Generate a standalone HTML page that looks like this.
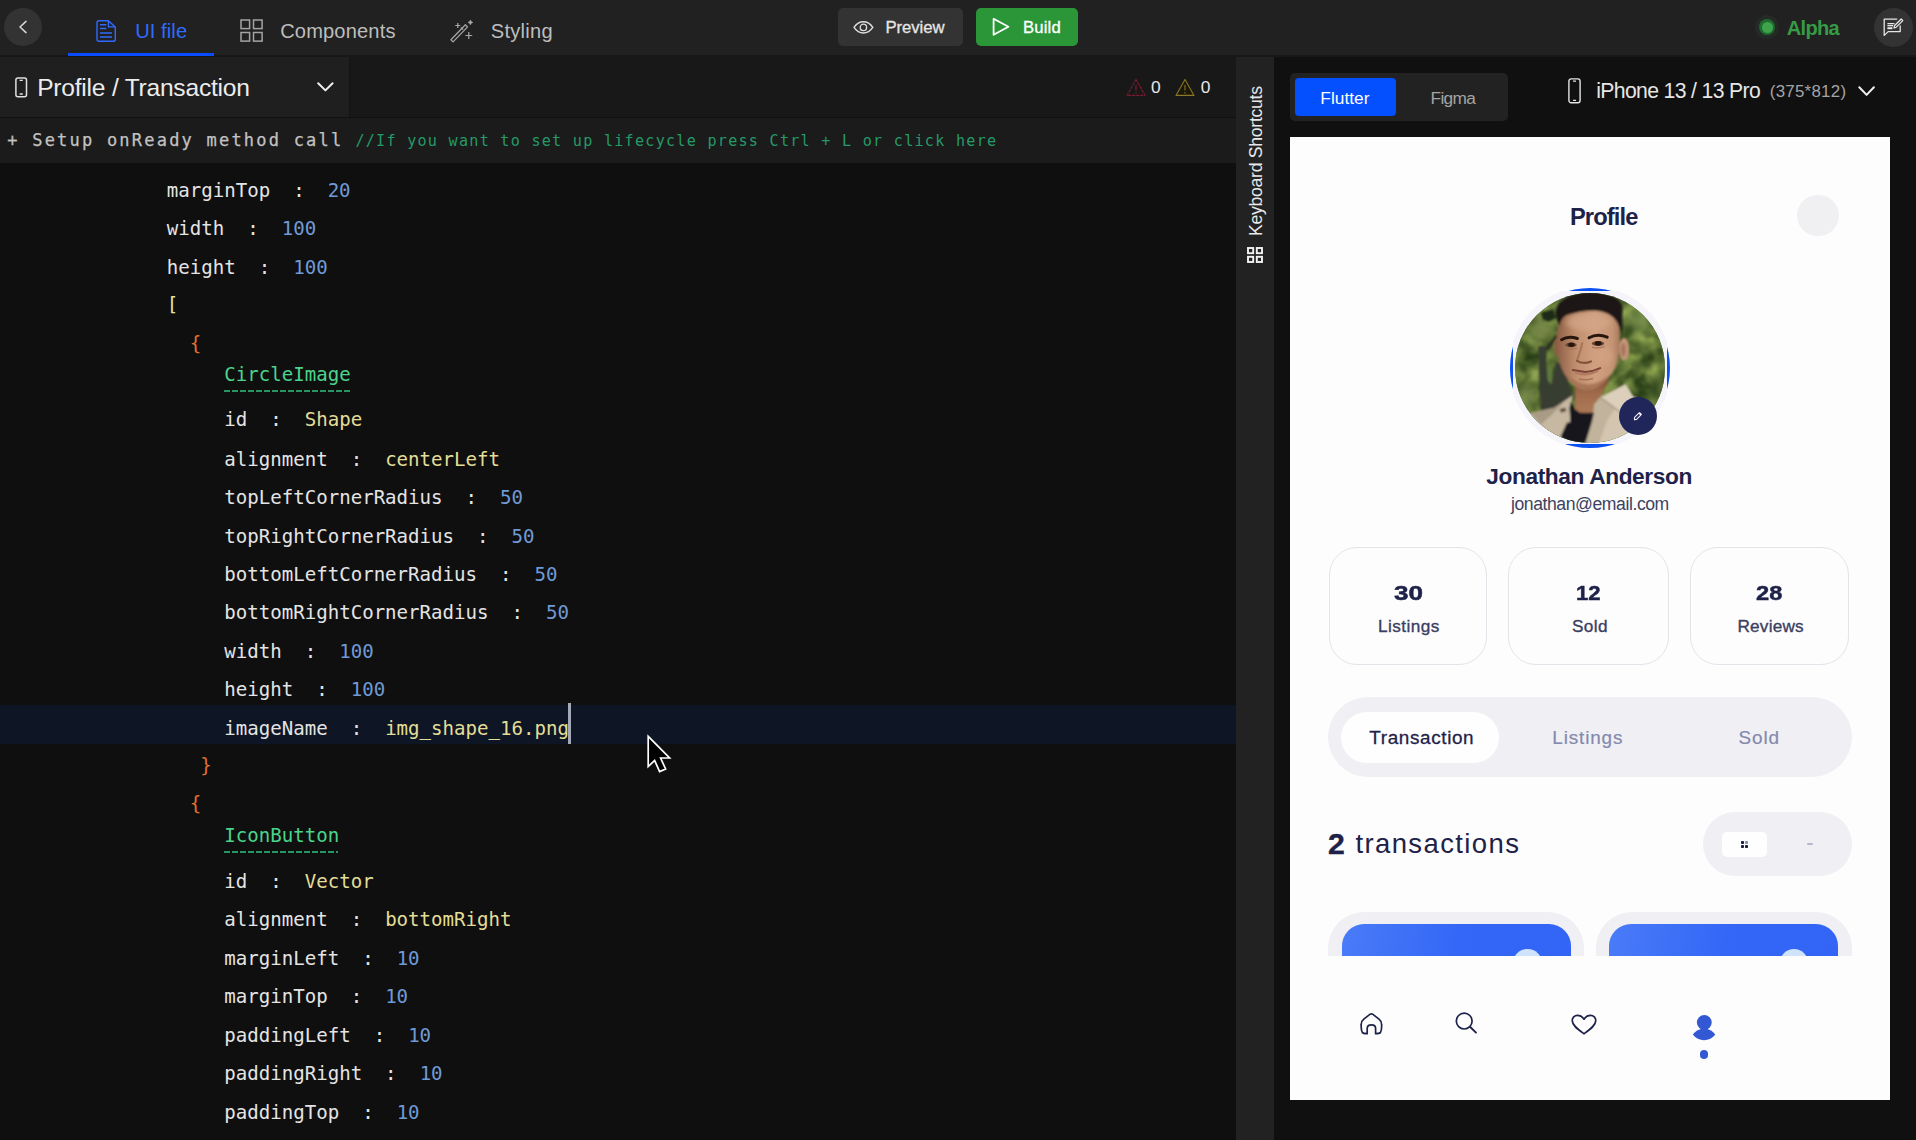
<!DOCTYPE html>
<html lang="en"><head><meta charset="utf-8"><title>Profile / Transaction - UI file</title>
<style>
html,body{margin:0;padding:0}
body{width:1916px;height:1140px;overflow:hidden;position:relative;background:#0f0f0f;font-family:'Liberation Sans',sans-serif;-webkit-font-smoothing:antialiased}
.a{position:absolute}
.t{position:absolute;white-space:pre;margin:0}
svg{position:absolute;overflow:visible}
.m{font-family:'DejaVu Sans Mono','Liberation Mono',monospace}
.cl{position:absolute;white-space:pre;font-family:'DejaVu Sans Mono','Liberation Mono',monospace;font-size:19.1px;line-height:21px;color:#e4e4e4}
.n{color:#6f9ad6}.s{color:#e3de97}.g{color:#4bd48b}
</style></head><body>
<div class="a" style="left:0;top:0;width:1916px;height:56px;background:#212121"></div>
<div class="a" style="left:0;top:55px;width:1916px;height:2px;background:#171717"></div>
<div class="a" style="left:4px;top:8px;width:38px;height:38px;border-radius:50%;background:#333"></div>
<svg style="left:4px;top:8px" width="38" height="38" viewBox="0 0 38 38"><path d="M22 13.4 L16 19 L22 24.6" fill="none" stroke="#d8d8d8" stroke-width="1.5" stroke-linecap="round" stroke-linejoin="round"/></svg>
<svg style="left:96px;top:19px" width="21" height="24" viewBox="0 0 21 24"><path d="M2.8 1.7 H12.4 L19.3 7.9 V20.5 Q19.3 22.3 17.5 22.3 H2.8 Q1 22.3 1 20.5 V3.5 Q1 1.7 2.8 1.7 Z M12.4 1.9 V7.9 H19.1" fill="none" stroke="#2f6bff" stroke-width="1.4" stroke-linejoin="round"/><path d="M4 5.7 H10.3 M4 9.5 H10.3 M4 13.9 H16 M4 17.9 H16" stroke="#2f6bff" stroke-width="1.5" fill="none"/></svg>
<div class="t" style="left:135.20px;top:19px;font-size:20.1px;line-height:25px;color:#2f6bff;letter-spacing:0.085px;">UI file</div>
<div class="a" style="left:68px;top:53px;width:146px;height:3px;background:#0a4dff"></div>
<svg style="left:240px;top:19.2px" width="23" height="23" viewBox="0 0 23 23"><g fill="none" stroke="#a4a4a4" stroke-width="1.5"><rect x="1" y="1" width="8.6" height="8.6"/><rect x="13.5" y="1" width="8.6" height="8.6"/><rect x="1" y="13.5" width="8.6" height="8.6"/><rect x="13.5" y="13.5" width="8.6" height="8.6"/></g></svg>
<div class="t" style="left:280.20px;top:19px;font-size:20.1px;line-height:25px;color:#bdbdbd;letter-spacing:0.146px;">Components</div>
<svg style="left:450px;top:19.5px" width="24" height="23" viewBox="0 0 24 23"><g fill="none" stroke="#a8a8a8" stroke-width="1.2" stroke-linejoin="round"><path d="M0.92 19.76 L15.42 4.76 L17.58 6.84 L3.08 21.84 Z"/><path d="M10.9 7.5 L13.1 9.5"/><path d="M7.8 3 V8 M5.3 5.5 H10.3"/><path d="M18.8 12.1 V18.9 M15.4 15.5 H22.2"/><path d="M20.4 0 L21.2 1.6 L22.8 2.4 L21.2 3.2 L20.4 4.8 L19.6 3.2 L18 2.4 L19.6 1.6 Z" stroke-width="0.6" fill="#a8a8a8"/></g></svg>
<div class="t" style="left:490.80px;top:19px;font-size:20.1px;line-height:25px;color:#bdbdbd;letter-spacing:0.261px;">Styling</div>
<div class="a" style="left:838.3px;top:7.6px;width:124.6px;height:38.4px;border-radius:5px;background:#333"></div>
<svg style="left:853px;top:19.5px" width="21" height="15" viewBox="0 0 21 15"><path d="M1 7.4 C4 3 7.4 1.8 10.4 1.8 C13.4 1.8 16.8 3 19.8 7.4 C16.8 11.8 13.4 13 10.4 13 C7.4 13 4 11.8 1 7.4 Z" fill="none" stroke="#e0e0e0" stroke-width="1.4"/><circle cx="10.4" cy="7.4" r="3.2" fill="none" stroke="#e0e0e0" stroke-width="1.3"/></svg>
<div class="t" style="left:885.50px;top:17px;font-size:16.7px;line-height:21px;color:#e6e6e6;letter-spacing:-0.067px;-webkit-text-stroke:0.3px #e6e6e6;">Preview</div>
<div class="a" style="left:976px;top:7.6px;width:102px;height:38.4px;border-radius:5px;background:#2a9638"></div>
<svg style="left:992px;top:17px" width="19" height="20" viewBox="0 0 19 20"><path d="M1.6 1.8 L16.4 9.8 L1.6 17.8 Z" fill="none" stroke="#fff" stroke-width="1.8" stroke-linejoin="round"/></svg>
<div class="t" style="left:1023.10px;top:17px;font-size:16.7px;line-height:21px;color:#fff;letter-spacing:0.118px;-webkit-text-stroke:0.3px #fff;">Build</div>
<div class="a" style="left:1755px;top:15px;width:24px;height:24px;border-radius:50%;background:#242a25"></div>
<div class="a" style="left:1759.3px;top:19.3px;width:16px;height:16px;border-radius:50%;background:#1f6a2c"></div>
<div class="a" style="left:1762px;top:22px;width:10.6px;height:10.6px;border-radius:50%;background:#3fa24c"></div>
<div class="t" style="left:1786.80px;top:16px;font-size:20.1px;line-height:25px;color:#379a45;font-weight:700;letter-spacing:-0.710px;">Alpha</div>
<div class="a" style="left:1874.2px;top:8.1px;width:38.8px;height:38.8px;border-radius:50%;background:#333"></div>
<svg style="left:1883px;top:17.7px" width="21" height="19" viewBox="0 0 21 19"><g fill="none" stroke="#e6e6e6" stroke-width="1.3" stroke-linejoin="round"><path d="M14.2 1.2 H1.2 V17.4 L5.2 13.6 H17.2 V7.4"/><path d="M4.4 5.6 H11.4 M4.4 7.6 H10"/><path d="M4.4 9.2 h5 v2 h-5 z" fill="#e6e6e6" stroke="none"/><path d="M18.2 1 L19.8 2.6 L13 9.4 L11 9.8 L11.4 7.8 Z"/></g></svg>
<div class="a" style="left:0;top:57px;width:350px;height:60px;background:#1f1f1f"></div>
<div class="a" style="left:350px;top:57px;width:886px;height:60px;background:#181818"></div>
<div class="a" style="left:0;top:116.5px;width:1236px;height:1.5px;background:#111"></div>
<div class="a" style="left:349px;top:57px;width:1.2px;height:59.5px;background:#141414"></div>
<svg style="left:15px;top:77px" width="13" height="21" viewBox="0 0 13 21"><rect x="0.9" y="0.9" width="10.6" height="18.8" rx="2" fill="none" stroke="#e0e0e0" stroke-width="1.5"/><path d="M4.6 3.4 H7.8 M4.6 17 H7.8" stroke="#e0e0e0" stroke-width="1.3"/></svg>
<div class="t" style="left:37.20px;top:73px;font-size:24.6px;line-height:29px;color:#ececec;letter-spacing:-0.231px;">Profile / Transaction</div>
<svg style="left:317px;top:82px" width="17" height="10" viewBox="0 0 17 10"><path d="M1.2 1.2 L8.4 8.4 L15.6 1.2" fill="none" stroke="#f0f0f0" stroke-width="2" stroke-linecap="round" stroke-linejoin="round"/></svg>
<svg style="left:1125.5px;top:77.5px" width="21" height="19" viewBox="0 0 21 19"><path d="M10 1.4 L19 17.4 H1 Z" fill="none" stroke="#7a1d33" stroke-width="1.1" stroke-linejoin="round" stroke-dasharray="3.2 0.8"/><path d="M10 7 V12.4 M10 14 V15.4" stroke="#7a1d33" stroke-width="1.2"/></svg>
<div class="t" style="left:1151.10px;top:76px;font-size:17.4px;line-height:22px;color:#e8e8e8;">0</div>
<svg style="left:1174.5px;top:77.5px" width="21" height="19" viewBox="0 0 21 19"><path d="M10 1.4 L19 17.4 H1 Z" fill="#1a1609" stroke="#8a7822" stroke-width="1.1" stroke-linejoin="round"/><path d="M10 7 V12.4 M10 14 V15.4" stroke="#8a7822" stroke-width="1.1"/></svg>
<div class="t" style="left:1200.70px;top:76px;font-size:17.4px;line-height:22px;color:#e8e8e8;">0</div>
<div class="a" style="left:0;top:118px;width:1236px;height:44.5px;background:#1b1b1b"></div>
<div class="t" style="left:7.30px;top:130px;font-size:17.0px;line-height:21px;color:#c2c2c2;font-family:'DejaVu Sans Mono', 'Liberation Mono', monospace;letter-spacing:2.215px;-webkit-text-stroke:0.25px #c2c2c2;">+ Setup onReady method call</div>
<div class="t" style="left:355.40px;top:131px;font-size:15.1px;line-height:20px;color:#259a68;font-family:'DejaVu Sans Mono', 'Liberation Mono', monospace;letter-spacing:1.267px;">//If you want to set up lifecycle press Ctrl + L or click here</div>
<div class="a" style="left:0;top:162.5px;width:1236px;height:978px;background:#0f0f0f"></div>
<div class="a" style="left:0;top:705.3px;width:1236px;height:38.8px;background:#0e1524"></div>
<div class="cl" style="left:166.70px;top:180px">marginTop  :  <span class="n">20</span></div>
<div class="cl" style="left:166.70px;top:218px">width  :  <span class="n">100</span></div>
<div class="cl" style="left:166.70px;top:257px">height  :  <span class="n">100</span></div>
<div class="cl" style="left:166.70px;top:294px"><span style="color:#e6e0a0">[</span></div>
<div class="cl" style="left:189.70px;top:333px"><span style="color:#e0702e">{</span></div>
<div class="cl" style="left:224.20px;top:364px"><span class="g">CircleImage</span></div>
<div class="a" style="left:224.4px;top:389.5px;width:127.4px;height:2px;background:repeating-linear-gradient(90deg,#2a9463 0 5.6px,transparent 5.6px 8px)"></div>
<div class="cl" style="left:224.20px;top:409px">id  :  <span class="s">Shape</span></div>
<div class="cl" style="left:224.20px;top:449px">alignment  :  <span class="s">centerLeft</span></div>
<div class="cl" style="left:224.20px;top:487px">topLeftCornerRadius  :  <span class="n">50</span></div>
<div class="cl" style="left:224.20px;top:526px">topRightCornerRadius  :  <span class="n">50</span></div>
<div class="cl" style="left:224.20px;top:564px">bottomLeftCornerRadius  :  <span class="n">50</span></div>
<div class="cl" style="left:224.20px;top:602px">bottomRightCornerRadius  :  <span class="n">50</span></div>
<div class="cl" style="left:224.20px;top:641px">width  :  <span class="n">100</span></div>
<div class="cl" style="left:224.20px;top:679px">height  :  <span class="n">100</span></div>
<div class="cl" style="left:224.20px;top:718px">imageName  :  <span class="s">img_shape_16.png</span></div>
<div class="a" style="left:568.4px;top:703.3px;width:2.8px;height:40.8px;background:#a3a9b6"></div>
<div class="cl" style="left:200.20px;top:755px"><span style="color:#e0702e">}</span></div>
<div class="cl" style="left:189.70px;top:793px"><span style="color:#e0702e">{</span></div>
<div class="cl" style="left:224.20px;top:825px"><span class="g">IconButton</span></div>
<div class="a" style="left:224.2px;top:851px;width:114px;height:2px;background:repeating-linear-gradient(90deg,#2a9463 0 5.6px,transparent 5.6px 8px)"></div>
<div class="cl" style="left:224.20px;top:871px">id  :  <span class="s">Vector</span></div>
<div class="cl" style="left:224.20px;top:909px">alignment  :  <span class="s">bottomRight</span></div>
<div class="cl" style="left:224.20px;top:948px">marginLeft  :  <span class="n">10</span></div>
<div class="cl" style="left:224.20px;top:986px">marginTop  :  <span class="n">10</span></div>
<div class="cl" style="left:224.20px;top:1025px">paddingLeft  :  <span class="n">10</span></div>
<div class="cl" style="left:224.20px;top:1063px">paddingRight  :  <span class="n">10</span></div>
<div class="cl" style="left:224.20px;top:1102px">paddingTop  :  <span class="n">10</span></div>
<svg style="left:644.8px;top:733.3px" width="30" height="42" viewBox="0 0 30 42"><path d="M3.2 3.4 V33.6 L9.6 27.4 L14.6 38.6 L20.6 36 L15.6 25 L24.6 25 Z" fill="#000" stroke="#fff" stroke-width="1.7" stroke-linejoin="miter"/></svg>
<div class="a" style="left:1236px;top:57px;width:38px;height:1083px;background:#222"></div>
<div class="a" style="left:1262.3px;top:235.4px;width:0;height:0;transform:rotate(-90deg);transform-origin:0 0"><div class="t" style="left:-1.00px;top:-17px;font-size:17.7px;line-height:22px;color:#e8e8e8;letter-spacing:-0.312px;">Keyboard Shortcuts</div></div>
<svg style="left:1246.8px;top:247.4px" width="16" height="16" viewBox="0 0 16 16"><g fill="none" stroke="#f2f2f2" stroke-width="1.9"><rect x="1" y="1" width="5.2" height="5.2"/><rect x="9.8" y="1" width="5.2" height="5.2"/><rect x="1" y="9.8" width="5.2" height="5.2"/><rect x="9.8" y="9.8" width="5.2" height="5.2"/></g></svg>
<div class="a" style="left:1274px;top:57px;width:642px;height:1083px;background:#101010"></div>
<div class="a" style="left:1290px;top:73px;width:217.5px;height:48px;border-radius:5px;background:#222"></div>
<div class="a" style="left:1295.3px;top:78px;width:100.8px;height:38.4px;border-radius:4px;background:#0450ff"></div>
<div class="t" style="left:1320.30px;top:87px;font-size:17.3px;line-height:22px;color:#fff;letter-spacing:0.030px;">Flutter</div>
<div class="t" style="left:1430.50px;top:87px;font-size:17.3px;line-height:22px;color:#a4a4a4;letter-spacing:-0.675px;">Figma</div>
<svg style="left:1568.4px;top:77.8px" width="14" height="26" viewBox="0 0 14 26"><rect x="0.9" y="0.9" width="11.2" height="23.8" rx="2.2" fill="none" stroke="#e4e4e4" stroke-width="1.4"/><path d="M5 3.2 H8 M5 22.4 H8" stroke="#e4e4e4" stroke-width="1.2"/></svg>
<div class="t" style="left:1596.30px;top:78px;font-size:21.2px;line-height:26px;color:#e6e6e6;letter-spacing:-0.655px;">iPhone 13 / 13 Pro</div>
<div class="t" style="left:1769.80px;top:81px;font-size:16.9px;line-height:21px;color:#a4a4a4;letter-spacing:0.255px;">(375*812)</div>
<svg style="left:1857.6px;top:85.6px" width="18" height="11" viewBox="0 0 18 11"><path d="M1.3 1.3 L8.6 8.9 L15.9 1.3" fill="none" stroke="#f0f0f0" stroke-width="2" stroke-linecap="round" stroke-linejoin="round"/></svg>
<div class="a" style="left:1290px;top:137px;width:600px;height:963px;background:#fdfdfd"></div>
<div class="t" style="left:1569.90px;top:203px;font-size:23.7px;line-height:28px;color:#1e2248;font-weight:700;letter-spacing:-0.856px;">Profile</div>
<div class="a" style="left:1797.3px;top:194.9px;width:41.6px;height:41.6px;border-radius:50%;background:#f0f0f3"></div>
<div class="a" style="left:1510px;top:287.5px;width:160px;height:160px;border-radius:50%;background:#0b50f2"></div>
<div class="a" style="left:1513.3px;top:290.8px;width:153.4px;height:153.4px;overflow:hidden"><div class="a" style="left:-4.7px;top:-4.7px;width:162.8px;height:162.8px;border-radius:50%;background:#f4f4fa"></div></div>
<svg style="left:1515px;top:292.5px" width="150" height="150" viewBox="1515 292.5 150 150">
<defs><clipPath id="avc"><circle cx="1590" cy="367.5" r="75"/></clipPath>
<filter id="b0" x="-20%" y="-20%" width="140%" height="140%"><feGaussianBlur stdDeviation="0.45"/></filter>
<filter id="b1" x="-20%" y="-20%" width="140%" height="140%"><feGaussianBlur stdDeviation="0.9"/></filter>
<filter id="b2" x="-30%" y="-30%" width="160%" height="160%"><feGaussianBlur stdDeviation="2"/></filter>
<filter id="b3" x="-30%" y="-30%" width="160%" height="160%"><feGaussianBlur stdDeviation="4"/></filter>
<filter id="leaf" x="0" y="0" width="100%" height="100%" color-interpolation-filters="sRGB"><feTurbulence type="fractalNoise" baseFrequency="0.06" numOctaves="3" seed="11"/><feColorMatrix type="matrix" values="0.74 0 0 0 -0.02  0.74 0 0 0 0.065  0.42 0 0 0 -0.015  0 0 0 0 1"/><feGaussianBlur stdDeviation="0.8"/></filter>
<linearGradient id="skin" x1="0" x2="1" y1="0" y2="0"><stop offset="0" stop-color="#8d5e45"/><stop offset="0.3" stop-color="#c08e6f"/><stop offset="0.6" stop-color="#d0a081"/><stop offset="0.88" stop-color="#c59475"/><stop offset="1" stop-color="#a97a5d"/></linearGradient>
<linearGradient id="neck" x1="0" x2="0" y1="0" y2="1"><stop offset="0" stop-color="#774630"/><stop offset="0.45" stop-color="#a06b4c"/><stop offset="1" stop-color="#ae7957"/></linearGradient>
</defs>
<g clip-path="url(#avc)">
<rect x="1515" y="292.5" width="150" height="150" fill="#5d783d"/>
<rect x="1515" y="292.5" width="150" height="150" filter="url(#leaf)"/>
<g filter="url(#b3)" opacity="0.8">
<ellipse cx="1540" cy="328" rx="11" ry="12" fill="#7f8f4e"/>
<ellipse cx="1526" cy="396" rx="9" ry="12" fill="#7b8e4f"/>
<ellipse cx="1640" cy="320" rx="12" ry="11" fill="#7a9250"/>
<ellipse cx="1656" cy="386" rx="7" ry="13" fill="#2c401c"/>
<ellipse cx="1640" cy="349" rx="7" ry="4" fill="#3a5226"/>
<ellipse cx="1526" cy="347" rx="6" ry="5" fill="#2b3f1d"/>
<ellipse cx="1645" cy="415" rx="10" ry="9" fill="#4a6630"/>
</g>
<g filter="url(#b1)">
<path d="M1541 312 L1553 309 L1556 317 L1549 321 L1543 319 Z" fill="#1c2915"/>
<path d="M1544.6 349 L1555.5 334 L1557.5 336 L1548 350 Z" fill="#2a2e20"/>
<path d="M1538.2 346 L1545.5 346 L1547.5 378 L1551 384 L1555.6 362 L1562.5 362 L1572 392 L1573 398 L1549 410 L1540.8 411 Z" fill="#393c30"/>
<path d="M1547 366 L1552.5 366 L1551 384 L1548 380 Z" fill="#5f7a3f"/>
<!-- neck -->
<path d="M1574.5 382 L1575.2 409 L1580 412.4 L1593.6 412.4 L1594.2 404 L1600.4 396.8 L1611 376 L1597 386 L1586 389 Z" fill="url(#neck)"/>
<!-- shirt left -->
<path d="M1514 424 L1530.7 412.6 L1554.4 407.2 L1572.8 394.8 L1570.4 409 L1570.4 421.4 L1566.7 422.6 L1559 446 L1514 446 Z" fill="#c6b8a1"/>
<path d="M1530.7 412.8 L1554.4 407.2 L1565 400.4 L1552 414 L1541 424 Z" fill="#a99b85"/>
<path d="M1559.5 408.6 L1565.5 407.2 L1566.4 410.6 L1561 412.2 Z" fill="#5e4632"/>
<!-- shirt right -->
<path d="M1593.6 412.4 L1594.2 404 L1600.4 396.8 L1625.6 383.6 L1632.8 395.2 L1642 401 L1672 420 L1672 446 L1584 446 L1585.4 442.6 L1592 421 Z" fill="#d3c5af"/>
<path d="M1594.2 404 L1600.4 396.8 L1609 392.4 L1617 405 L1607 420 L1598 446 L1585 446 L1592 421 Z" fill="#c2b39c"/>
<path d="M1600.4 396.8 L1625.6 383.6 L1632.8 395.2 L1619.6 411 Z" fill="#dccfbb"/>
<path d="M1600.4 397 L1619.6 411" stroke="#9f8f78" stroke-width="1.2" fill="none"/>
<!-- tee -->
<path d="M1571 400.8 L1575.2 409 L1580 412.2 L1594 412.2 L1592 421 L1585.4 442.8 L1574 444 L1560.4 436.4 L1566.7 422.4 L1570.4 421.4 L1569.4 407.2 Z" fill="#15161a"/>
<!-- ears -->
<ellipse cx="1624.2" cy="348.6" rx="4.9" ry="11.4" fill="#c6957a"/>
<ellipse cx="1623.4" cy="349.4" rx="2.2" ry="7" fill="#a87359"/>
<ellipse cx="1556.6" cy="347" rx="2.6" ry="8.5" fill="#8c5d44"/>
<!-- face -->
<path d="M1560.5 318 C1557.5 326 1556.2 338 1556.8 348 C1557.6 358 1560.4 366 1564.5 373.5 C1568.5 380.5 1574.5 385.5 1580.5 388 C1585.5 390 1591.5 389.8 1597 386.8 C1603 383.4 1609.5 377 1614 369.6 C1618 363 1619.6 354 1619.8 345 C1620 337 1619.8 329 1618 322 C1615 314 1608 309 1597 308.5 C1586 308 1572 308.5 1566 311.5 C1563 313 1561.5 315 1560.5 318 Z" fill="url(#skin)"/>
<ellipse cx="1588" cy="322" rx="22" ry="8" fill="#d6a98a" opacity="0.65" filter="url(#b2)"/>
<ellipse cx="1605" cy="356" rx="8" ry="9" fill="#d5a586" opacity="0.6" filter="url(#b2)"/>
<path d="M1564 372 C1570 382 1578 388 1588 389.6 C1598 388.4 1607 380 1613 371 C1606 378 1598 383.4 1588 384 C1578 383.4 1570 378 1564 372 Z" fill="#a06c4f" opacity="0.8"/>
<!-- hair -->
<path d="M1559.4 326 C1558.2 322 1557.4 320 1556.6 318 C1554.8 310 1556.4 304.4 1561.4 300.4 C1567.4 295.6 1576 292.6 1586 291.4 C1596 290.4 1606 292.4 1613 295.8 C1619.4 298.8 1622.4 302.6 1622.4 308 L1622.4 328 C1622.2 331 1621.8 333 1621 335.4 C1620.6 331 1619.6 326 1617 321.6 C1613.6 316 1607.6 311.4 1597.5 310.4 C1589 309.8 1578 311 1567 314.6 C1563.4 316.4 1561 319.4 1559.4 326 Z" fill="#1a1917"/>
</g><g filter="url(#b0)">
<!-- brows / eyes / nose / mouth -->
<path d="M1561.6 339.2 Q1568.4 334.8 1577.4 338" stroke="#26160e" stroke-width="3" fill="none" stroke-linecap="round"/>
<path d="M1589 337.2 Q1597.6 332.4 1607.2 336.6" stroke="#26160e" stroke-width="3" fill="none" stroke-linecap="round"/>
<ellipse cx="1571" cy="344.4" rx="5.6" ry="2.3" fill="#6b4532"/><ellipse cx="1571.4" cy="344.2" rx="3.2" ry="2.2" fill="#24140d"/>
<ellipse cx="1598" cy="343" rx="6.1" ry="2.4" fill="#6b4532"/><ellipse cx="1598.2" cy="342.8" rx="3.4" ry="2.3" fill="#24140d"/>
<path d="M1565.6 347.8 Q1571 349.6 1577 347.6" stroke="#a77558" stroke-width="1.2" fill="none"/>
<path d="M1592 346.6 Q1598 348.6 1604.6 346" stroke="#a77558" stroke-width="1.2" fill="none"/>
<path d="M1582.4 342 C1581 349 1578.6 355 1577.2 359.4" stroke="#a97657" stroke-width="2.2" fill="none"/>
<path d="M1577 360.4 Q1583.5 364.2 1591 361" stroke="#84533b" stroke-width="2.2" fill="none" stroke-linecap="round"/>
<path d="M1572.8 369.4 Q1579 370.6 1585.5 371.4 Q1593.5 371 1600.2 367.6" stroke="#7c4334" stroke-width="2" fill="none" stroke-linecap="round"/>
<path d="M1575.5 372 Q1586 376.4 1597.5 370.6" stroke="#b07a62" stroke-width="2.2" fill="none" stroke-linecap="round"/>
<path d="M1579 378.4 Q1586 380.2 1593 378" stroke="#a87558" stroke-width="1.6" fill="none"/>
</g>
</g></svg>
<div class="a" style="left:1619.4px;top:396.8px;width:37.8px;height:37.8px;border-radius:50%;background:#21265a"></div>
<svg style="left:1633.4px;top:410.8px" width="10" height="10" viewBox="0 0 10 10"><path d="M1.6 6.4 L5.8 2.2 L7.8 4.2 L3.6 8.4 L1.4 8.6 Z M6.6 1.6 L8.4 3.4" fill="none" stroke="#eef" stroke-width="1.1" stroke-linejoin="round" stroke-linecap="round"/></svg>
<div class="t" style="left:1486.20px;top:463px;font-size:22.7px;line-height:27px;color:#1e2248;font-weight:700;letter-spacing:-0.373px;">Jonathan Anderson</div>
<div class="t" style="left:1511.00px;top:493px;font-size:17.6px;line-height:22px;color:#3c4262;letter-spacing:-0.428px;">jonathan@email.com</div>
<div class="a" style="left:1329.0px;top:546.8px;width:156.0px;height:116.2px;border:1.6px solid #e3e4ea;border-radius:28px;background:#fdfdfe"></div>
<div class="t" style="left:1393.80px;top:580px;font-size:21.1px;line-height:26px;color:#1e2248;font-weight:700;transform:scaleX(1.2362);transform-origin:0 0;-webkit-text-stroke:0.5px #1e2248;">30</div>
<div class="t" style="left:1377.90px;top:615px;font-size:17.2px;line-height:22px;color:#3a4062;letter-spacing:0.445px;-webkit-text-stroke:0.35px #3a4062;">Listings</div>
<div class="a" style="left:1508.2px;top:546.8px;width:158.8px;height:116.2px;border:1.6px solid #e3e4ea;border-radius:28px;background:#fdfdfe"></div>
<div class="t" style="left:1575.55px;top:580px;font-size:21.1px;line-height:26px;color:#1e2248;font-weight:700;transform:scaleX(1.0492);transform-origin:0 0;-webkit-text-stroke:0.5px #1e2248;">12</div>
<div class="t" style="left:1571.90px;top:615px;font-size:17.2px;line-height:22px;color:#3a4062;letter-spacing:0.386px;-webkit-text-stroke:0.35px #3a4062;">Sold</div>
<div class="a" style="left:1690.2px;top:546.8px;width:156.8px;height:116.2px;border:1.6px solid #e3e4ea;border-radius:28px;background:#fdfdfe"></div>
<div class="t" style="left:1755.70px;top:580px;font-size:21.1px;line-height:26px;color:#1e2248;font-weight:700;transform:scaleX(1.1209);transform-origin:0 0;-webkit-text-stroke:0.5px #1e2248;">28</div>
<div class="t" style="left:1737.50px;top:615px;font-size:17.2px;line-height:22px;color:#3a4062;letter-spacing:0.191px;-webkit-text-stroke:0.35px #3a4062;">Reviews</div>
<div class="a" style="left:1328.4px;top:697px;width:523.8px;height:80px;border-radius:40px;background:#f0f0f4"></div>
<div class="a" style="left:1341.1px;top:711.8px;width:158.2px;height:51.2px;border-radius:26px;background:#fefefe"></div>
<div class="t" style="left:1369.30px;top:726px;font-size:18.9px;line-height:23px;color:#1e2248;letter-spacing:0.631px;-webkit-text-stroke:0.3px #1e2248;">Transaction</div>
<div class="t" style="left:1552.30px;top:726px;font-size:18.9px;line-height:23px;color:#8489ad;letter-spacing:0.871px;-webkit-text-stroke:0.2px #8489ad;">Listings</div>
<div class="t" style="left:1738.50px;top:726px;font-size:18.9px;line-height:23px;color:#8489ad;letter-spacing:0.932px;-webkit-text-stroke:0.2px #8489ad;">Sold</div>
<div class="t" style="left:1328.10px;top:826px;font-size:30.2px;line-height:35px;color:#1e2248;font-weight:700;-webkit-text-stroke:0.4px #1e2248;">2 </div>
<div class="t" style="left:1355.40px;top:828px;font-size:27.5px;line-height:32px;color:#1e2248;letter-spacing:1.389px;">transactions</div>
<div class="a" style="left:1702.9px;top:811.9px;width:148.8px;height:64.6px;border-radius:33px;background:#f0f0f4"></div>
<div class="a" style="left:1722px;top:832px;width:45px;height:24.8px;border-radius:5px;background:#fefefe"></div>
<svg style="left:1740.8px;top:841px" width="7" height="7" viewBox="0 0 7 7"><g fill="#1a1e40"><rect x="0" y="0" width="3" height="3" rx="0.8"/><rect x="4" y="0" width="3" height="3" rx="0.8" fill="#8a8eb4"/><rect x="0" y="4" width="3" height="3" rx="0.8"/><rect x="4" y="4" width="3" height="3" rx="0.8"/></g></svg>
<div class="a" style="left:1807.2px;top:843.4px;width:6px;height:1.8px;border-radius:1px;background:#b3b7d2"></div>
<div class="a" style="left:1290px;top:900px;width:600px;height:55.6px;overflow:hidden">
<div class="a" style="left:38.2px;top:12px;width:255.8px;height:200px;border-radius:36px;background:#f0f0f4"></div>
<div class="a" style="left:51.7px;top:23.9px;width:229.5px;height:200px;border-radius:22px;background:linear-gradient(100deg,#4a7bf8 0%,#3467f6 45%,#3263f5 100%);overflow:hidden"><div class="a" style="left:171.3px;top:25.5px;width:28.6px;height:28.6px;border-radius:50%;background:#cfe4fb"></div></div>
<div class="a" style="left:306.0px;top:12px;width:255.8px;height:200px;border-radius:36px;background:#f0f0f4"></div>
<div class="a" style="left:318.8px;top:23.9px;width:229.5px;height:200px;border-radius:22px;background:linear-gradient(100deg,#4a7bf8 0%,#3467f6 45%,#3263f5 100%);overflow:hidden"><div class="a" style="left:170.8px;top:25.5px;width:28.6px;height:28.6px;border-radius:50%;background:#cfe4fb"></div></div>
</div>
<svg style="left:1358px;top:1011px" width="27" height="26" viewBox="1358 1011 27 26"><path d="M1361.2 1024.4 C1361.2 1021.8 1362 1020.6 1363.8 1019.2 L1368.6 1015.3 C1370.4 1013.6 1372.4 1013.6 1374.2 1015.3 L1379 1019.2 C1380.8 1020.6 1381.6 1021.8 1381.6 1024.4 C1381.8 1028 1381.4 1031 1380.4 1032.6 C1379.6 1033.6 1378 1033.7 1375.6 1033.7 L1375.6 1028.4 C1375.6 1026.4 1374 1024.8 1371.4 1024.8 C1368.8 1024.8 1367.2 1026.4 1367.2 1028.4 L1367.2 1033.7 C1364.8 1033.7 1363.2 1033.6 1362.4 1032.6 C1361.4 1031 1361 1028 1361.2 1024.4 Z" fill="none" stroke="#1e2248" stroke-width="1.7" stroke-linejoin="round"/></svg>
<svg style="left:1453px;top:1010px" width="27" height="26" viewBox="1453 1010 27 26"><circle cx="1464.2" cy="1021.1" r="7.9" fill="none" stroke="#1e2248" stroke-width="1.7"/><path d="M1470.2 1027 L1476 1032.6" stroke="#1e2248" stroke-width="1.9" stroke-linecap="round"/></svg>
<svg style="left:1569px;top:1012px" width="30" height="25" viewBox="1569 1012 30 25"><path d="M1584 1033.8 C1578 1029.4 1572.2 1025.4 1572.2 1020.6 C1572.2 1017.6 1574.6 1015.4 1577.4 1015.4 C1580 1015.4 1582.4 1016.8 1584 1019.2 C1585.6 1016.8 1588 1015.4 1590.6 1015.4 C1593.4 1015.4 1595.8 1017.6 1595.8 1020.6 C1595.8 1025.4 1590 1029.4 1584 1033.8 Z" fill="none" stroke="#1e2248" stroke-width="1.7" stroke-linejoin="round"/></svg>
<svg style="left:1690px;top:1013px" width="28" height="30" viewBox="1690 1013 28 30"><circle cx="1704.3" cy="1022.4" r="7.4" fill="#3358d4"/><path d="M1692.8 1034.6 C1695.6 1030.8 1699.6 1028.8 1704 1028.8 C1708.6 1028.8 1712.6 1030.8 1715.3 1034.6 C1712.4 1038.2 1708.6 1040.2 1704 1040.2 C1699.6 1040.2 1695.6 1038.2 1692.8 1034.6 Z" fill="#3358d4"/></svg>
<div class="a" style="left:1699.7px;top:1050.4px;width:8.8px;height:8.8px;border-radius:50%;background:#3358d4"></div>
</body></html>
